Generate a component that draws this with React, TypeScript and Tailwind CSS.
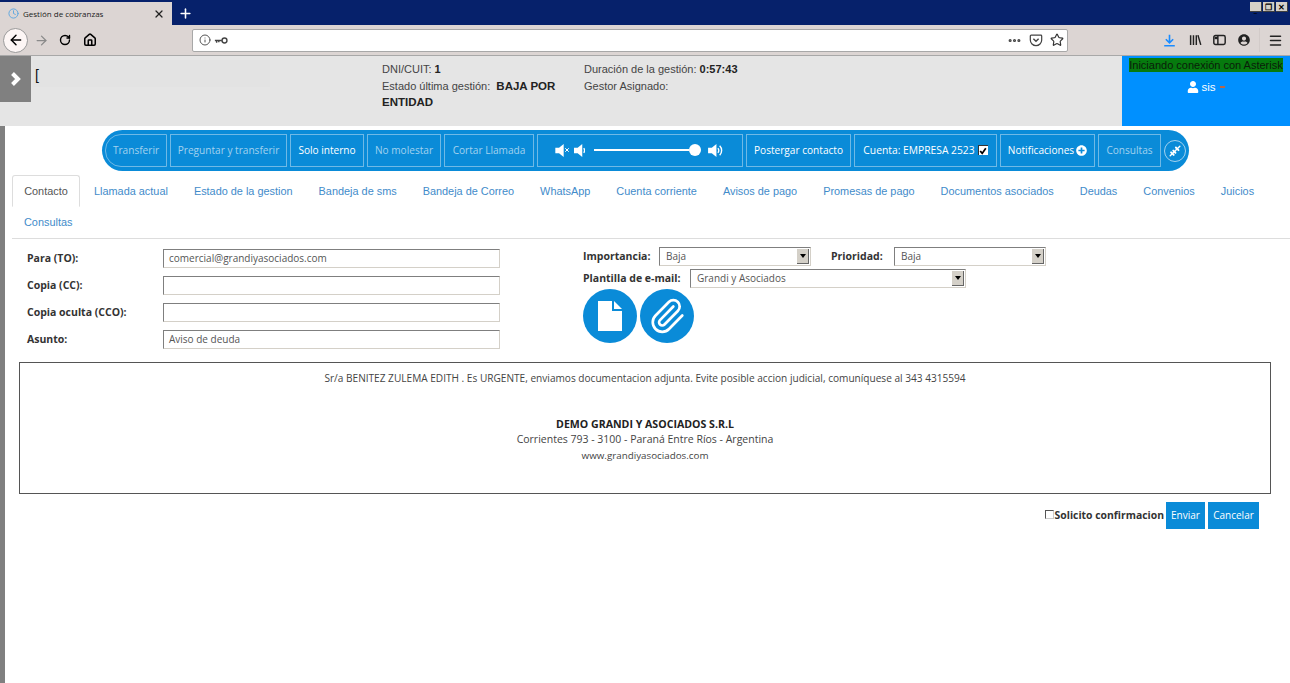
import React from 'react';
import { ArrowLeft, ArrowRight, RotateCw, Info, Ellipsis, Star, Menu, X, Plus, Clock, House, Paperclip } from 'lucide-react';
import { FaPlusCircle, FaUser, FaUserCircle } from 'react-icons/fa';

const sans = "font-['Liberation_Sans',Arial,sans-serif]";

const tabs = [
  'Llamada actual', 'Estado de la gestion', 'Bandeja de sms', 'Bandeja de Correo', 'WhatsApp', 'Cuenta corriente',
  'Avisos de pago', 'Promesas de pago', 'Documentos asociados', 'Deudas', 'Convenios', 'Juicios',
];

function WinButton({ children }: { children: React.ReactNode }) {
  return (
    <div className="w-[12px] h-[10px] bg-[#d4d0c8] border-r border-b border-[#404040] flex items-center justify-center text-black text-[8px] font-bold leading-none">
      {children}
    </div>
  );
}

function Speaker({ className, waves = 0 }: { className: string; waves?: number }) {
  const width = waves === 0 ? 9 : waves === 1 ? 12 : 16;
  return (
    <svg viewBox={`0 0 ${width} 14`} className={className} fill="none" stroke="currentColor" strokeWidth="1.5">
      <path d="M0 4h4l5-4v14l-5-4H0z" fill="currentColor" stroke="none" />
      {waves > 0 && <path d="M10.500 4.500a3.500 3.500 0 0 1 0 5" />}
      {waves > 1 && <path d="M12.500 2a7 7 0 0 1 0 10" />}
    </svg>
  );
}

function BrowserChrome() {
  return (
    <div className="shrink-0">
      <div className="h-[25px] bg-[#06216b] flex pt-[2px]">
        <div className="w-[172px] bg-[#dcd5d3] flex items-center pl-[8px] pr-[7px] text-[#222]">
          <Clock className="w-[11px] h-[11px] text-[#5aa5e0]" />
          <span className="ml-[4px] text-[8px] font-['Open_Sans',sans-serif] flex-1">Gestión de cobranzas</span>
          <X className="w-[12px] h-[12px]" strokeWidth={2.5} />
        </div>
        <div className="ml-[6px] flex items-center">
          <Plus className="w-[15px] h-[15px] text-white" strokeWidth={2.5} />
        </div>
        <div className="ml-auto mr-[2px] flex gap-[1px] h-[10px]">
          <WinButton><span className="mt-[4px]">_</span></WinButton>
          <WinButton>❐</WinButton>
          <WinButton>✕</WinButton>
        </div>
      </div>
      <div className="h-[31px] bg-[#dcd5d3] border-b border-[#a8a8a8] flex items-center">
        <div className="ml-[3px] w-[25px] h-[25px] rounded-full bg-[#fdf6f5] border border-[#9a9a9a] flex items-center justify-center">
          <ArrowLeft className="w-[16px] h-[16px] text-black" strokeWidth={2.2} />
        </div>
        <ArrowRight className="ml-[6px] w-[15px] h-[15px] text-[#8a8a8a]" />
        <RotateCw className="ml-[10px] w-[12px] h-[12px] text-black" strokeWidth={2.8} />
        <House className="ml-[12px] w-[14px] h-[14px] text-black" strokeWidth={2.6} />
        <div className="ml-[95px] w-[876px] h-[23px] bg-white border border-[#a8a8a8] rounded-[2px] flex items-center pl-[6px] pr-[3px]">
          <Info className="w-[12px] h-[12px] text-[#555]" />
          <svg viewBox="0 0 16 8" className="ml-[3px] w-[14px] h-[7px] text-[#444]" fill="none" stroke="currentColor" strokeWidth="1.6">
            <circle cx="12" cy="4" r="2.8" />
            <path d="M9 4H1M3 4v2.5M5.5 4v2" />
          </svg>
          <Ellipsis className="ml-auto w-[15px] h-[15px] text-[#444]" strokeWidth={3} />
          <svg viewBox="0 0 16 16" className="ml-[7px] w-[14px] h-[14px] text-[#444]" fill="none" stroke="currentColor" strokeWidth="1.4">
            <path d="M2.500 2.500h11a1 1 0 0 1 1 1V8a6.500 6.500 0 0 1-13 0V3.500a1 1 0 0 1 1-1z" />
            <path d="M5 6.500l3 3 3-3" strokeWidth="1.6" />
          </svg>
          <Star className="ml-[7px] w-[14px] h-[14px] text-[#333]" strokeWidth={2} />
        </div>
        <svg viewBox="0 0 16 16" className="ml-[95px] w-[13px] h-[13px] text-[#1a8cff]" fill="none" stroke="currentColor" strokeWidth="2">
          <path d="M8 1v9M3.500 6.500L8 11l4.500-4.500M1.500 14.500h13" />
        </svg>
        <svg viewBox="0 0 16 14" className="ml-[13px] w-[13px] h-[12px] text-[#222]" fill="none" stroke="currentColor" strokeWidth="1.8">
          <path d="M2 1v12M5.500 1v12M9 1v12M11 1l3.500 12" />
        </svg>
        <svg viewBox="0 0 16 14" className="ml-[11px] w-[13px] h-[12px] text-[#222]" fill="none" stroke="currentColor" strokeWidth="1.8">
          <rect x="1" y="1.500" width="14" height="11" rx="2" />
          <path d="M6 2v10" />
          <path d="M2 3h4v3H2z" fill="currentColor" stroke="none" />
        </svg>
        <FaUserCircle className="ml-[12px] w-[12px] h-[12px] text-[#222]" />
        <div className="ml-[9px] w-px h-[24px] bg-[#d2cbc9]" />
        <Menu className="ml-[8px] w-[15px] h-[15px] text-[#222]" strokeWidth={2.4} />
      </div>
    </div>
  );
}

function PatientHeader() {
  return (
    <div className={`h-[70px] bg-[#e5e5e5] flex shrink-0 text-[11px] text-[#444] ${sans}`}>
      <div className="w-[33px] shrink-0" />
      <div className="w-[237px] h-[27px] mt-[4px] bg-[#e3e3e3] text-[14px] text-[#111] pl-[2px] leading-[30px] shrink-0">[</div>
      <div className="ml-[112px] w-[202px] pr-[12px] pt-[5px] leading-[16.5px]">
        <div>DNI/CUIT: <b className="text-[#222]">1</b></div>
        <div>Estado última gestión: &nbsp;<b className="text-[11.5px] text-[#222]">BAJA POR</b></div>
        <div><b className="text-[11.5px] text-[#222]">ENTIDAD</b></div>
      </div>
      <div className="pt-[5px] leading-[16.5px]">
        <div>Duración de la gestión: <b className="text-[#222]">0:57:43</b></div>
        <div>Gestor Asignado:</div>
      </div>
      <div className="ml-auto w-[168px] bg-[#0090ff] pt-[1px] text-center">
        <span className="bg-[#067a0e] text-[#0a1c0a] text-[11px] leading-[14px] inline-block">Iniciando conexión con Asterisk</span>
        <div className="mt-[5px] flex items-center justify-center text-white text-[11.5px]">
          <FaUser className="w-[12px] h-[12px] mr-[2px]" />
          sis
          <span className="ml-[4px] w-[5px] h-[2px] bg-[#b8674a]" />
        </div>
      </div>
    </div>
  );
}

function ToolButton({ w, dim, round, children }: { w: string; dim?: boolean; round?: boolean; children: React.ReactNode }) {
  return (
    <div className={`h-[33px] pt-[1px] border border-[#6fb9e6] flex items-center justify-center text-[10.1px] shrink-0 ${w} ${dim ? 'text-[#a3d2ef]' : 'text-white'} ${round ? 'rounded-l-[16px]' : ''}`}>
      {children}
    </div>
  );
}

function Toolbar() {
  return (
    <div className="ml-[97px] mt-[4px] w-[1087px] h-[41px] bg-[#0a8bd8] rounded-[21px] flex items-center pl-[3px] gap-[3px] font-['Open_Sans',sans-serif]">
      <ToolButton w="w-[62px]" dim round>Transferir</ToolButton>
      <ToolButton w="w-[117px]" dim>Preguntar y transferir</ToolButton>
      <ToolButton w="w-[74px]">Solo interno</ToolButton>
      <ToolButton w="w-[74px]" dim>No molestar</ToolButton>
      <ToolButton w="w-[90px]" dim>Cortar Llamada</ToolButton>
      <ToolButton w="w-[206px]">
        <div className="flex items-center w-full pl-[17px] -mt-[2px]">
          <Speaker className="w-[9px] h-[13px]" />
          <X className="w-[6px] h-[6px]" strokeWidth={4} />
          <Speaker className="ml-[4px] w-[11px] h-[13px]" waves={1} />
          <div className="ml-[9px] w-[95px] h-[2px] bg-white" />
          <div className="w-[12px] h-[12px] rounded-full bg-white" />
          <Speaker className="ml-[7px] w-[15px] h-[13px]" waves={2} />
        </div>
      </ToolButton>
      <ToolButton w="w-[105px]">Postergar contacto</ToolButton>
      <ToolButton w="w-[143px]">
        <span className="text-[10.3px]">Cuenta: EMPRESA 2523</span>
        <span className="ml-[3px] -mt-[2px] w-[10px] h-[10px] bg-white border-t border-l border-[#333] flex items-center justify-center">
          <svg viewBox="0 0 10 10" className="w-[8px] h-[8px] text-black" fill="none" stroke="currentColor" strokeWidth="2.2">
            <path d="M1.500 5l2.500 3 4.500-6.500" />
          </svg>
        </span>
      </ToolButton>
      <ToolButton w="w-[95px]">
        Notificaciones
        <FaPlusCircle className="ml-[2px] -mt-[2px] w-[11px] h-[11px]" />
      </ToolButton>
      <ToolButton w="w-[63px]" dim>Consultas</ToolButton>
      <div className="w-[22px] h-[22px] rounded-full border border-[#a3d2ef] flex items-center justify-center shrink-0">
        <svg viewBox="0 0 16 16" className="w-[14px] h-[14px] text-white" fill="none" stroke="currentColor" strokeLinecap="round">
          <path d="M2.500 13.500l11-11" strokeWidth="1.6" />
          <path d="M3.500 9.500l3 3M6 7.500l2.500 2.500M9 4l3 3" strokeWidth="2.2" />
        </svg>
      </div>
    </div>
  );
}

function Tabs() {
  return (
    <div className={`mt-[4px] ml-[7px] h-[64px] border-b border-[#dddddd] flex flex-wrap content-start text-[10.9px] text-[#428bca] ${sans}`}>
      <div className="h-[32px] w-[68px] flex items-center justify-center bg-white border border-[#dddddd] border-b-white rounded-t-[3px] text-[#555] mr-[2px]">Contacto</div>
      {tabs.map((t) => (
        <div key={t} className="h-[32px] px-[12px] mr-[2px] flex items-center whitespace-nowrap">{t}</div>
      ))}
      <div className="h-[31px] px-[12px] flex items-center">Consultas</div>
    </div>
  );
}

function Field({ label, value }: { label: string; value?: string }) {
  return (
    <div className="h-[27px] flex items-center">
      <label className="w-[136px] font-bold text-[10.5px] text-[#333]">{label}</label>
      <div className="w-[337px] h-[19px] bg-white border border-[#d4d0c8] border-t-[#7f7f7f] border-l-[#7f7f7f] text-[10px] text-[#555] pl-[5px] leading-[17px]">{value}</div>
    </div>
  );
}

function Select({ w, value }: { w: string; value: string }) {
  return (
    <div className={`h-[19px] bg-white border border-[#d4d0c8] border-t-[#7f7f7f] border-l-[#7f7f7f] flex items-center pl-[6px] text-[10px] text-[#555] ${w}`}>
      {value}
      <div className="ml-auto w-[12px] h-[15px] mr-[1px] bg-[#d4d0c8] border-r border-b border-[#666] flex items-center justify-center">
        <span className="border-x-[3px] border-x-transparent border-t-[4px] border-t-black" />
      </div>
    </div>
  );
}

function EmailForm() {
  return (
    <div className="flex pt-[5px] pl-[22px] font-['Open_Sans',sans-serif] h-[123px]">
      <div className="w-[556px] pt-[1px]">
        <Field label="Para (TO):" value="comercial@grandiyasociados.com" />
        <Field label="Copia (CC):" />
        <Field label="Copia oculta (CCO):" />
        <Field label="Asunto:" value="Aviso de deuda" />
      </div>
      <div className="font-bold text-[10.5px] text-[#333] pt-[3px]">
        <div className="flex items-center">
          <span className="w-[76px]">Importancia:</span>
          <div className="font-normal"><Select w="w-[152px]" value="Baja" /></div>
          <span className="ml-[20px] w-[63px]">Prioridad:</span>
          <div className="font-normal"><Select w="w-[152px]" value="Baja" /></div>
        </div>
        <div className="flex items-center mt-[3px]">
          <span className="w-[107px]">Plantilla de e-mail:</span>
          <div className="font-normal"><Select w="w-[276px]" value="Grandi y Asociados" /></div>
        </div>
        <div className="flex gap-[3px] mt-[1px]">
          <div className="w-[54px] h-[54px] rounded-full bg-[#0a8bd8] flex items-center justify-center">
            <svg viewBox="0 0 24 30" className="w-[24px] h-[30px] text-white" fill="currentColor">
              <path d="M0 0h14v10h10v20H0z" />
              <path d="M16 0l8 8h-8z" />
            </svg>
          </div>
          <div className="w-[54px] h-[54px] rounded-full bg-[#0a8bd8] flex items-center justify-center">
            <Paperclip className="w-[38px] h-[38px] text-white" strokeWidth={1.7} />
          </div>
        </div>
      </div>
    </div>
  );
}

export default function App() {
  return (
    <div className="w-[1290px] h-[683px] bg-white overflow-hidden relative flex flex-col">
      <BrowserChrome />
      <PatientHeader />
      {/* tab that opens the side menu, lies over the header */}
      <div className="absolute left-0 top-[56px] w-[31px] h-[46px] bg-[#808080] flex items-center justify-center">
        <svg viewBox="0 0 12 14" className="w-[12px] h-[14px] text-white" fill="none" stroke="currentColor" strokeWidth="4">
          <path d="M2.500 1.500L8 7l-5.500 5.500" />
        </svg>
      </div>
      <div className="flex flex-1">
        <div className="w-[5px] bg-[#808080] shrink-0" />
        <div className="flex-1 min-w-0">
          <Toolbar />
          <Tabs />
          <EmailForm />
          <div className="ml-[14px] w-[1252px] h-[132px] border border-[#555] text-center text-[10.5px] text-[#444] font-['Open_Sans',sans-serif] pt-[8px] leading-[15.5px]">
            <div className="text-[10.1px]">Sr/a BENITEZ ZULEMA EDITH . Es URGENTE, enviamos documentacion adjunta. Evite posible accion judicial, comuníquese al 343 4315594</div>
            <div className="mt-[30px] font-bold text-[10.6px] text-[#222]">DEMO GRANDI Y ASOCIADOS S.R.L</div>
            <div>Corrientes 793 - 3100 - Paraná Entre Ríos - Argentina</div>
            <div className="text-[9.8px]">www.grandiyasociados.com</div>
          </div>
          <div className="mt-[8px] mr-[31px] flex items-center justify-end font-['Open_Sans',sans-serif] text-[10px]">
            <div className="w-[9px] h-[9px] border border-[#555] border-r-[#ccc] border-b-[#ccc] mb-[3px]" />
            <span className="ml-px font-bold text-[10.4px] text-[#333]">Solicito confirmacion</span>
            <div className="ml-[2px] w-[39px] h-[27px] bg-[#0a8bd8] text-white flex items-center justify-center">Enviar</div>
            <div className="ml-[3px] w-[51px] h-[27px] bg-[#0a8bd8] text-white flex items-center justify-center">Cancelar</div>
          </div>
        </div>
      </div>
    </div>
  );
}
